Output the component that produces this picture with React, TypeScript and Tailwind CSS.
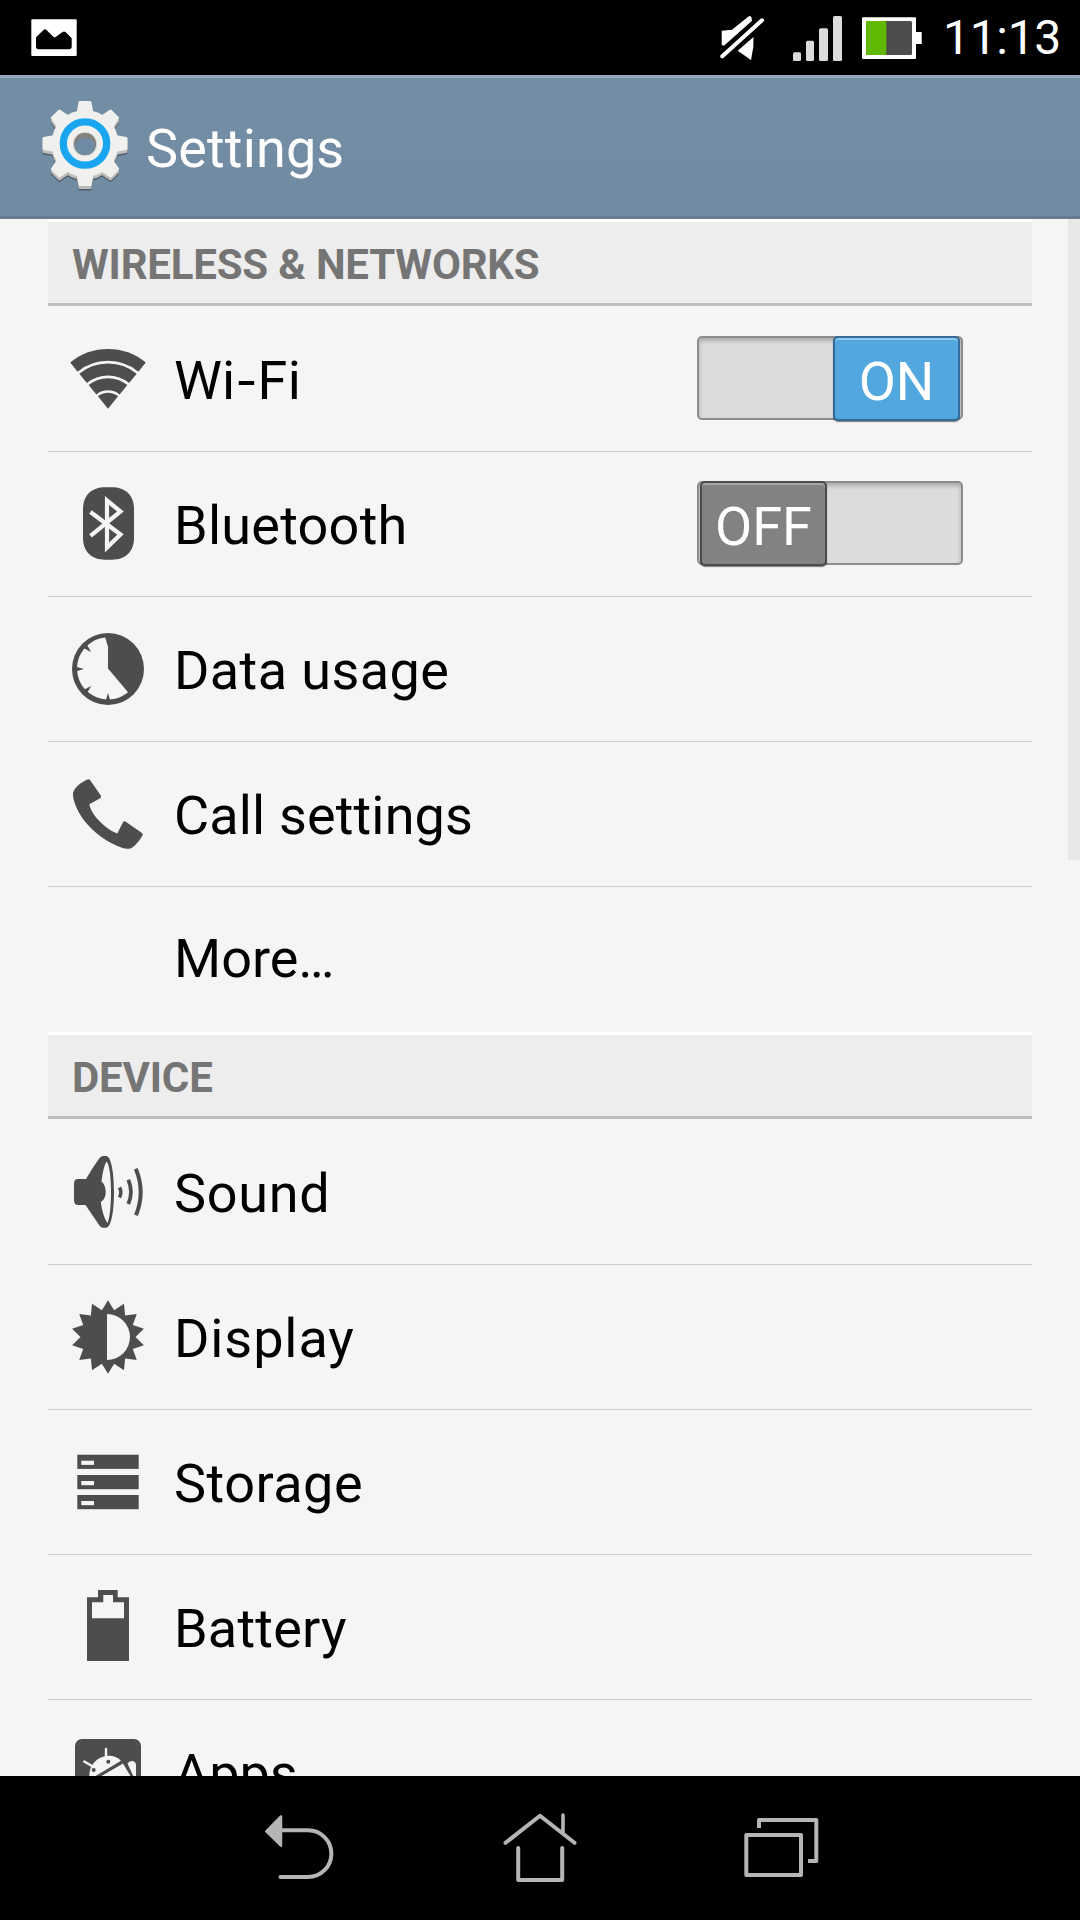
import React from 'react';
import clsx from 'clsx';

interface SettingItem {
  id: string;
  label: React.ReactNode;
  icon?: React.ReactNode;
  enabled?: boolean;
  tracking?: string;
}

interface SettingSection {
  title: string;
  items: SettingItem[];
}

const ICON = '#4d4d4d';
const PAGE = '#f5f5f5';

// n-pointed outline alternating between two radii
const starPoints = (cx: number, cy: number, points: number, outer: number, inner: number) =>
  Array.from({ length: points * 2 }, (_, i) => {
    const r = i % 2 === 0 ? outer : inner;
    const a = (Math.PI * i) / points;
    return `${(cx + r * Math.sin(a)).toFixed(2)},${(cy - r * Math.cos(a)).toFixed(2)}`;
  }).join(' ');

const WifiIcon = () => (
  <svg viewBox="0 0 80 80" className="w-20 h-20" fill="none" stroke={ICON}>
    <path d="M5.9 28.1A53.85 53.85 0 0 1 74.1 28.1" strokeWidth="11.7" />
    <path d="M15.1 39.3A39.3 39.3 0 0 1 64.9 39.3" strokeWidth="12" />
    <path d="M24.5 50.8A24.5 24.5 0 0 1 55.5 50.8" strokeWidth="12.2" />
    <path d="M40 69.7L29.9 57.3A16 16 0 0 1 50.1 57.3Z" fill={ICON} stroke="none" />
  </svg>
);

const BluetoothIcon = () => (
  <svg viewBox="0 0 80 80" className="w-20 h-20">
    <path
      d="M15 25C15 11 24 3.3 37 3.3H44C57 3.3 66 11 66 25V54C66 68 57 75.7 44 75.7H37C24 75.7 15 68 15 54Z"
      fill={ICON}
    />
    <path d="M22.5 28L52.5 50.5L39 63.5V16.5L52.5 27.5L22.5 51.8" fill="none" stroke={PAGE} strokeWidth="4.2" />
  </svg>
);

const DataUsageIcon = () => (
  <svg viewBox="0 0 80 80" className="w-20 h-20">
    <circle cx="40" cy="40" r="36" fill={ICON} />
    <path d="M37.3 8.6L40 17.7V39.5L60 63.2A31 31 0 1 1 37.3 8.6Z" fill={PAGE} />
    {[0, 45, 90, 135].map(angle => (
      <path key={angle} d="M37.7 71.8L40 64L42.3 71.8Z" fill={ICON} transform={`rotate(${angle} 40 40)`} />
    ))}
  </svg>
);

const CallIcon = () => (
  <svg viewBox="0 0 80 80" className="w-20 h-20" fill={ICON}>
    <path d="M19.6 5.4Q21 4.8 22 6L32.8 21.6Q33.6 23.2 32.2 24.2L21.3 30.3C23 41 38 55.5 49.3 59.4L55 48.2Q56 46.8 57.4 47.6L74 59Q75.3 60 74.4 61.6C71.5 67 67 72 63.5 74C61 75.3 58 75 54 73.7C42 70 25 59 15 45C9 36 4.5 26 5 19C6.5 13 13.5 8 19.6 5.4Z" />
  </svg>
);

const SoundIcon = () => (
  <svg viewBox="0 0 80 80" className="w-20 h-20">
    <path
      d="M10 27H18C21 22 27 12 32 5.5Q33.3 4 35 4H38C43.5 4 46 22 46 40C46 58 43.5 75.7 38 75.7H35Q33 75.7 31.6 73.8L17.5 53H10Q6 53 6 48V32Q6 27 10 27Z"
      fill={ICON}
    />
    <path
      d="M38.7 9.5C42 14 43 28 43 40C43 52 42 66 39.5 71C36 66 33.8 58 32.8 49.8C36 48.5 37.7 44.5 37.7 40C37.7 35.5 36 31 33.5 29.7C34.5 22 36 13 38.7 9.5Z"
      fill={PAGE}
    />
    <g fill="none" stroke={ICON}>
      <path d="M51.5 35.5Q54.2 40.3 51.5 45.5" strokeWidth="3.6" />
      <path d="M60.3 27.8Q65.6 40 60.3 52" strokeWidth="3.8" />
      <path d="M67.8 16.8Q77.5 40 68 63.2" strokeWidth="4" />
    </g>
  </svg>
);

const DisplayIcon = () => (
  <svg viewBox="0 0 80 80" className="w-20 h-20">
    <polygon points={starPoints(40, 40, 14, 36.8, 27.5)} fill={ICON} />
    <path d="M39 17A23 23 0 0 1 39 63Z" fill={PAGE} />
  </svg>
);

const StorageIcon = () => (
  <svg viewBox="0 0 80 80" className="w-20 h-20">
    {[12.7, 33, 53].map(y => (
      <g key={y}>
        <rect x="9.3" y={y} width="61.4" height="14.2" fill={ICON} />
        <rect x="13.3" y={y + 6} width="12.7" height="4.2" fill={PAGE} />
      </g>
    ))}
  </svg>
);

const BatteryIcon = () => (
  <svg viewBox="0 0 80 80" className="w-20 h-20">
    <path d="M19 10.3H30V3H49.7V10.3H61V74H19Z" fill={ICON} />
    <path d="M24 15.3H35.3V8H45V15.3H56V31.3H24Z" fill={PAGE} />
  </svg>
);

const AppsIcon = () => (
  <svg viewBox="0 0 80 80" className="w-20 h-20">
    <rect x="7" y="7" width="66" height="66" rx="7" fill={ICON} />
    <g fill={PAGE} stroke="none">
      <path d="M21.5 46C20.500 37 25 29 33 25.500C40 22.500 48 23.500 53 28.800L23.500 46.500Z" />
      <path d="M27.5 47.5L55 31.5L66 50L60 60H36Z" />
      <path d="M59.5 31.5Q61 28.5 64.5 29Q68 29.5 68 33.5V50Z" />
    </g>
    <path d="M38 17V27M16.2 29.5L24 34" fill="none" stroke={PAGE} strokeWidth="2.4" strokeLinecap="round" />
    <circle cx="40.3" cy="29.7" r="2" fill={ICON} />
    <circle cx="25.7" cy="38" r="2" fill={ICON} />
  </svg>
);

const gearTeeth = [0, 45, 90, 135, 180, 225, 270, 315];

const GearShape = ({ dy, fill }: { dy: number; fill: string }) => (
  <g transform={`translate(0 ${dy})`} fill={fill}>
    <circle cx="48" cy="46" r="33.5" />
    {gearTeeth.map(angle => (
      <path
        key={angle}
        d="M39.5 16L41.6 4.5Q41.8 3.500 42.8 3.500H53.2Q54.2 3.500 54.4 4.500L56.5 16Z"
        transform={`rotate(${angle} 48 46)`}
      />
    ))}
  </g>
);

const GearIcon = () => (
  <svg viewBox="0 0 96 96" className="mb-1 w-24 h-24">
    <GearShape dy={5} fill="#4f5d6a" />
    <GearShape dy={3.5} fill="#bdbcb9" />
    <GearShape dy={0.5} fill="#f0f0ee" />
    <circle cx="48" cy="46.5" r="21.7" fill="none" stroke="#1aa5f0" strokeWidth="7.3" />
    <circle cx="48" cy="47" r="12.3" fill="#dededc" />
    <circle cx="48" cy="47" r="11.2" fill="#85817e" />
    <ellipse cx="48" cy="49.2" rx="10" ry="8.8" fill="#6f8aa3" />
  </svg>
);

const StatusBar = () => (
  <div className="flex h-[75px] shrink-0 bg-black pl-[31px] pr-[18px]">
    <svg viewBox="0 0 46 75" className="w-[46px] h-[75px]">
      <rect x="0.3" y="19.3" width="45.4" height="36.7" rx="1" fill="#fff" />
      <path
        d="M5 37.3L12.3 30.3Q14 28.3 15.7 30.3L22.3 36.7Q23.7 38 25 36.7L31.5 32Q33 31 34.5 32L40.7 38.3V46.5Q40.7 49.3 38 49.3H7.5Q5 49.3 5 46.5Z"
        fill="#000"
      />
    </svg>
    <div className="ml-auto flex">
      <svg viewBox="0 0 46 75" className="w-[46px] h-[75px]" fill="#fff">
        <path d="M1.7 30.7L12 29.7L28.5 16.5Q30.5 15 31.5 17.5L32 20.7L4 45.7L1.7 45Z" />
        <path d="M33.5 37L33.3 47L31 60L17.7 50.7Z" />
        <path d="M2.3 56.3L42 20.3" fill="none" stroke="#fff" strokeWidth="4" strokeLinecap="round" />
      </svg>
      <svg viewBox="0 0 50 75" className="w-[50px] h-[75px] ml-[26px]" fill="#d9dcdb">
        <rect x="1" y="52.3" width="8" height="8.7" rx="1.5" />
        <rect x="14" y="40.7" width="8" height="20.3" rx="1.5" />
        <rect x="27" y="28.3" width="9" height="32.7" rx="1.5" />
        <rect x="41" y="16" width="9" height="45" rx="1.5" />
      </svg>
      <svg viewBox="0 0 60 75" className="w-[60px] h-[75px] ml-5">
        <rect x="0" y="17.3" width="54" height="41.7" rx="1" fill="#fff" />
        <rect x="53" y="32" width="6.7" height="12" fill="#fff" />
        <rect x="4" y="21" width="46" height="34" rx="1.5" fill="#4d4d4d" />
        <rect x="4" y="21" width="20.3" height="34" rx="1" fill="#60b800" />
      </svg>
      <span className="ml-[21px] w-[119px] text-[48px] leading-[75px] tracking-[-0.3px] text-white whitespace-nowrap">
        11:13
      </span>
    </div>
  </div>
);

const ActionBar = () => (
  <div className="flex h-[144px] shrink-0 items-center border-t-[3px] border-b-[3px] border-t-[#93a9be] border-b-[#667b8f] bg-linear-to-b from-[#738fa5] to-[#708aa2] pl-[37px]">
    <GearIcon />
    <h1 className="ml-[13px] pt-[3px] text-[54px] leading-[64px] tracking-[0.15px] text-white">Settings</h1>
  </div>
);

const Toggle = ({ on }: { on: boolean }) => (
  <div
    className={clsx(
      'mb-[2px] flex h-[84px] w-[266px] rounded-[5px] border-2 border-[#8c8c8c] bg-[#dcdcdc] shadow-[inset_0_3px_4px_rgba(0,0,0,0.22)]',
      on ? 'justify-end pr-px' : 'pl-px'
    )}
  >
    <div
      className={clsx(
        '-mt-[2px] flex h-[85px] w-[127px] items-center justify-center rounded-[5px] border-2 pt-[6px] text-[54px] leading-[64px] text-white',
        on
          ? 'border-[#366a99] bg-[#52a7df] shadow-[inset_0_2px_0_#8fc9f0,0_1px_1px_rgba(0,0,0,0.5)]'
          : 'border-[#4c4c4c] bg-[#828282] shadow-[inset_0_2px_0_#a5a5a5,0_1px_1px_rgba(0,0,0,0.5)]'
      )}
    >
      {on ? 'ON' : 'OFF'}
    </div>
  </div>
);

const SettingRow = ({ item, first }: { item: SettingItem; first: boolean }) => (
  <li
    className={clsx(
      'flex shrink-0 items-center border-t pl-5 pr-[69px]',
      first ? 'border-transparent' : 'border-[#cdcfce]',
      item.icon ? 'h-[145px]' : 'h-[146px] pb-[5px]'
    )}
  >
    <div className="h-20 w-20 shrink-0">{item.icon}</div>
    <span className={clsx('ml-[26px] pt-[3px] text-[54px] leading-[64px] text-black', item.tracking)}>
      {item.label}
    </span>
    {item.enabled !== undefined && (
      <div className="ml-auto">
        <Toggle on={item.enabled} />
      </div>
    )}
  </li>
);

const WifiLabel = () => (
  <>
    Wi<span className="mx-[3.5px] inline-block scale-x-[1.2]">-</span>Fi
  </>
);

const sections: SettingSection[] = [
  {
    title: 'WIRELESS & NETWORKS',
    items: [
      { id: 'wifi', label: <WifiLabel />, icon: <WifiIcon />, enabled: true, tracking: 'tracking-[0.2px]' },
      { id: 'bluetooth', label: 'Bluetooth', icon: <BluetoothIcon />, enabled: false, tracking: 'tracking-[0.25px]' },
      { id: 'data', label: 'Data usage', icon: <DataUsageIcon />, tracking: 'tracking-[0.4px]' },
      { id: 'call', label: 'Call settings', icon: <CallIcon />, tracking: 'tracking-[0.15px]' },
      { id: 'more', label: 'More…' },
    ],
  },
  {
    title: 'DEVICE',
    items: [
      { id: 'sound', label: 'Sound', icon: <SoundIcon />, tracking: 'tracking-[0.7px]' },
      { id: 'display', label: 'Display', icon: <DisplayIcon />, tracking: 'tracking-[0.9px]' },
      { id: 'storage', label: 'Storage', icon: <StorageIcon />, tracking: 'tracking-[0.5px]' },
      { id: 'battery', label: 'Battery', icon: <BatteryIcon />, tracking: 'tracking-[0.2px]' },
      { id: 'apps', label: 'Apps', icon: <AppsIcon /> },
    ],
  },
];

const NavigationBar = () => (
  <div className="flex h-[144px] shrink-0 items-center justify-center gap-[161px] bg-black">
    <svg viewBox="0 0 80 112" className="w-20 h-28" fill="none" stroke="#b5b5b5" strokeWidth="4">
      <path d="M22 38.3H49A23.35 23.35 0 0 1 49 85H21.5" strokeLinecap="round" />
      <path d="M7.3 39.3L22 24.5V53.7Z" fill="#b5b5b5" strokeWidth="2.5" strokeLinejoin="round" />
    </svg>
    <svg
      viewBox="0 0 80 112"
      className="w-20 h-28"
      fill="none"
      stroke="#b5b5b5"
      strokeWidth="4"
      strokeLinecap="round"
      strokeLinejoin="round"
    >
      <path d="M5.5 50.8L40 23.7L74.5 50.8" />
      <path d="M63 23V40" strokeWidth="3.6" />
      <path d="M18.2 56V88H62.2V56" />
    </svg>
    <svg viewBox="0 0 80 112" className="w-20 h-28" fill="none" stroke="#b5b5b5" strokeWidth="4" strokeLinejoin="round">
      <rect x="5.3" y="43" width="54.7" height="40" />
      <path d="M18 36V28H75.3V69H67" />
    </svg>
  </div>
);

const App: React.FC = () => {
  return (
    <div className="flex h-[1920px] w-[1080px] flex-col overflow-hidden bg-[#f5f5f5] font-[Roboto,sans-serif]">
      <StatusBar />
      <ActionBar />
      <main className="flex min-h-0 flex-1 overflow-hidden">
        <div className="ml-12 w-[984px] shrink-0">
          {sections.map(section => (
            <section key={section.title}>
              <h2 className="h-[87px] border-t-[3px] border-b-[3px] border-t-white border-b-[#bdbdbd] bg-[#ededed] pl-6 text-[42px] font-bold leading-[85px] tracking-[-0.2px] text-[#757575]">
                {section.title}
              </h2>
              <ul>
                {section.items.map((item, index) => (
                  <SettingRow key={item.id} item={item} first={index === 0} />
                ))}
              </ul>
            </section>
          ))}
        </div>
        <div className="ml-auto h-[641px] w-3 bg-[#e8e8e8]" />
      </main>
      <NavigationBar />
    </div>
  );
};

export default App;
